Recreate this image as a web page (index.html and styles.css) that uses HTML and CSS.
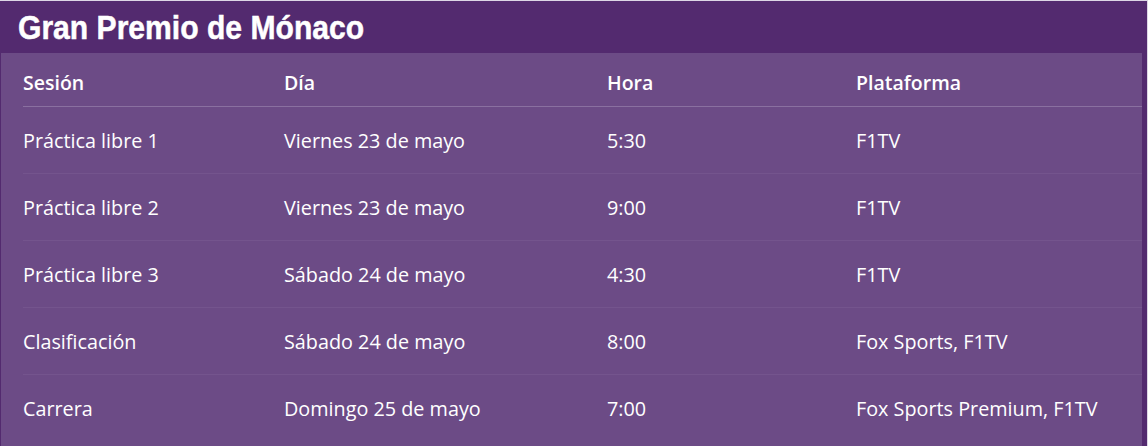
FILE: index.html
```html
<!DOCTYPE html>
<html lang="es">
<head>
    <meta charset="UTF-8" />
    <title>Gran Premio de Mónaco</title>
    <link rel="stylesheet" href="styles.css">
</head>
<body>
   <div class="box">
       <h2 class="title"><span>Gran Premio de Mónaco</span></h2>
       <div class="wrap">
           <table class="horario">
               <thead>
                   <tr>
                       <th class="c1">Sesión</th>
                       <th class="c2">Día</th>
                       <th class="c3">Hora</th>
                       <th>Plataforma</th>
                   </tr>
               </thead>
               <tbody>
                   <tr>
                       <td>Práctica libre 1</td>
                       <td>Viernes 23 de mayo</td>
                       <td>5:30</td>
                       <td>F1TV</td>
                   </tr>
                   <tr>
                       <td>Práctica libre 2</td>
                       <td>Viernes 23 de mayo</td>
                       <td>9:00</td>
                       <td>F1TV</td>
                   </tr>
                   <tr>
                       <td>Práctica libre 3</td>
                       <td>Sábado 24 de mayo</td>
                       <td>4:30</td>
                       <td>F1TV</td>
                   </tr>
                   <tr>
                       <td>Clasificación</td>
                       <td>Sábado 24 de mayo</td>
                       <td>8:00</td>
                       <td>Fox Sports, F1TV</td>
                   </tr>
                   <tr>
                       <td>Carrera</td>
                       <td>Domingo 25 de mayo</td>
                       <td>7:00</td>
                       <td>Fox Sports Premium, F1TV</td>
                   </tr>
               </tbody>
           </table>
       </div>
   </div>
</body>
</html>
```

FILE: styles.css
```css
*{
    padding:0;
    margin:0;
    box-sizing:border-box;
}
html,body{
    height:100%;
}
body{
    background:#ddd6e6;
    overflow:hidden;
}
.box{
    width: 1147px;
    height: 445px;
    margin-top:1px;
    background:#532a6f;
    padding-left:1px;
    padding-right:5px;
    display:flex;
    flex-direction:column;
    overflow:hidden;
}
.title{
    height: 52px;
    padding-left:17px;
    padding-top:6px;
    color:#fff;
    font-family:"Liberation Sans", Arial, sans-serif;
    font-weight:bold;
    font-size:34px;
    line-height:40px;
    white-space:nowrap;
}
/* letra estrecha y gruesa, como Arial Narrow */
.title span{
    display:inline-block;
    transform:scaleX(0.885);
    transform-origin:left center;
    -webkit-text-stroke:0.5px #fff;
}
.wrap{
    flex:1;
    background:#6c4b86;
    padding-left:22px;
}
.horario{
    width:100%;
    border-collapse:collapse;
    color:#fff;
    font-family:"Open Sans", "Noto Sans", sans-serif;
    font-size:19.8px;
    text-align:left;
}
.horario th{
    font-size:19.5px;
    font-weight:600;
    height:53px;
    padding-top:7px;
    border-bottom:1px solid #8a70a0;
}
.horario td{
    height:67px;
    padding-top:2px;
    font-weight:400;
    border-bottom:1px solid #74548d;
}
.horario tbody tr:last-child td{
    border-bottom:none;
}
.c1{
    width:261px;
}
.c2{
    width:323px;
}
.c3{
    width:249px;
}
```
